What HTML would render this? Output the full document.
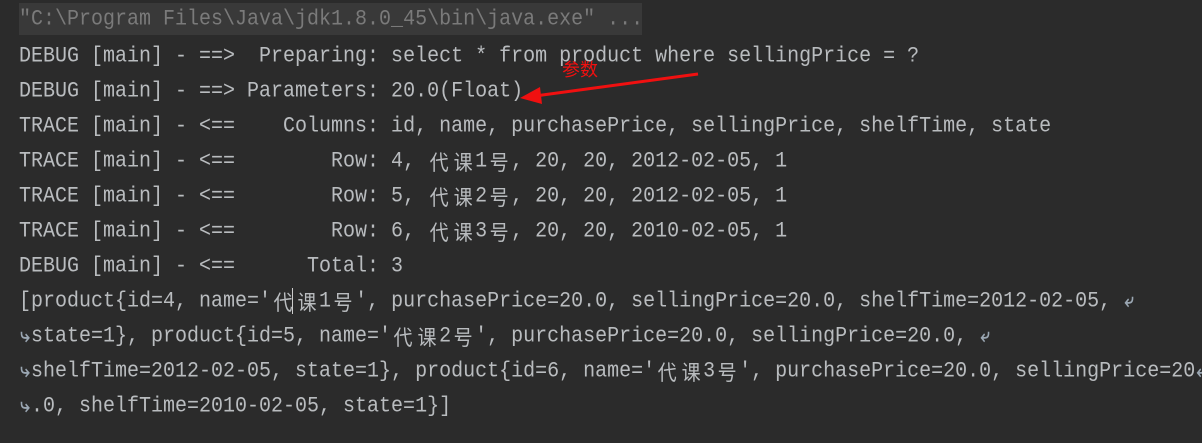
<!DOCTYPE html>
<html><head><meta charset="utf-8"><style>
html,body{margin:0;padding:0;background:#2b2b2b;width:1202px;height:443px;overflow:hidden}
.l{position:absolute;left:19px;height:35px;line-height:35px;white-space:pre;font-family:"Liberation Mono","DejaVu Sans Mono",monospace;font-size:20px;letter-spacing:0;color:#b9bcbf;transform:scaleY(1.12);transform-origin:0 50%}
.c{display:inline-block;width:24px;height:35px;line-height:35px;vertical-align:top;overflow:hidden;text-align:center;font-family:"Noto Sans CJK SC",sans-serif;font-size:19px}
.w{display:inline-block;width:12px;height:35px;line-height:35px;vertical-align:top;overflow:hidden;color:#9aa6b2;font-family:"DejaVu Sans",sans-serif;font-size:17px;text-align:center;font-weight:bold}
.hd{position:absolute;left:19px;top:3px;width:623px;height:32px;background:#393939}
</style></head><body>
<div class="hd"></div>
<div class="l" style="top:2px;color:#7a7a7a">"C:\Program Files\Java\jdk1.8.0_45\bin\java.exe" ...</div>
<div class="l" style="top:39px">DEBUG [main] - ==>  Preparing: select * from product where sellingPrice = ?</div>
<div class="l" style="top:74px">DEBUG [main] - ==> Parameters: 20.0(Float)</div>
<div class="l" style="top:109px">TRACE [main] - &lt;==    Columns: id, name, purchasePrice, sellingPrice, shelfTime, state</div>
<div class="l" style="top:144px">TRACE [main] - &lt;==        Row: 4, <span class="c">代</span><span class="c">课</span>1<span class="c">号</span>, 20, 20, 2012-02-05, 1</div>
<div class="l" style="top:179px">TRACE [main] - &lt;==        Row: 5, <span class="c">代</span><span class="c">课</span>2<span class="c">号</span>, 20, 20, 2012-02-05, 1</div>
<div class="l" style="top:214px">TRACE [main] - &lt;==        Row: 6, <span class="c">代</span><span class="c">课</span>3<span class="c">号</span>, 20, 20, 2010-02-05, 1</div>
<div class="l" style="top:249px">DEBUG [main] - &lt;==      Total: 3</div>
<div class="l" style="top:284px">[product{id=4, name='<span class="c">代</span><span class="c">课</span>1<span class="c">号</span>', purchasePrice=20.0, sellingPrice=20.0, shelfTime=2012-02-05, <span class="w">⤶</span></div>
<div class="l" style="top:319px"><span class="w">⤷</span>state=1}, product{id=5, name='<span class="c">代</span><span class="c">课</span>2<span class="c">号</span>', purchasePrice=20.0, sellingPrice=20.0, <span class="w">⤶</span></div>
<div class="l" style="top:354px"><span class="w">⤷</span>shelfTime=2012-02-05, state=1}, product{id=6, name='<span class="c">代</span><span class="c">课</span>3<span class="c">号</span>', purchasePrice=20.0, sellingPrice=20<span class="w">⤶</span></div>
<div class="l" style="top:389px"><span class="w">⤷</span>.0, shelfTime=2010-02-05, state=1}]</div>
<div style="position:absolute;left:292px;top:288px;width:1px;height:26px;background:#ccc"></div>
<div style="position:absolute;left:562px;top:58px;color:#f01010;font-family:'Noto Sans CJK SC',sans-serif;font-size:18px;line-height:22px">参数</div>
<svg style="position:absolute;left:0;top:0" width="1202" height="443">
<line x1="698" y1="74" x2="535" y2="96" stroke="#f01010" stroke-width="3"/>
<polygon points="520,98 540,87 542,104" fill="#f01010"/>
</svg>
</body></html>
